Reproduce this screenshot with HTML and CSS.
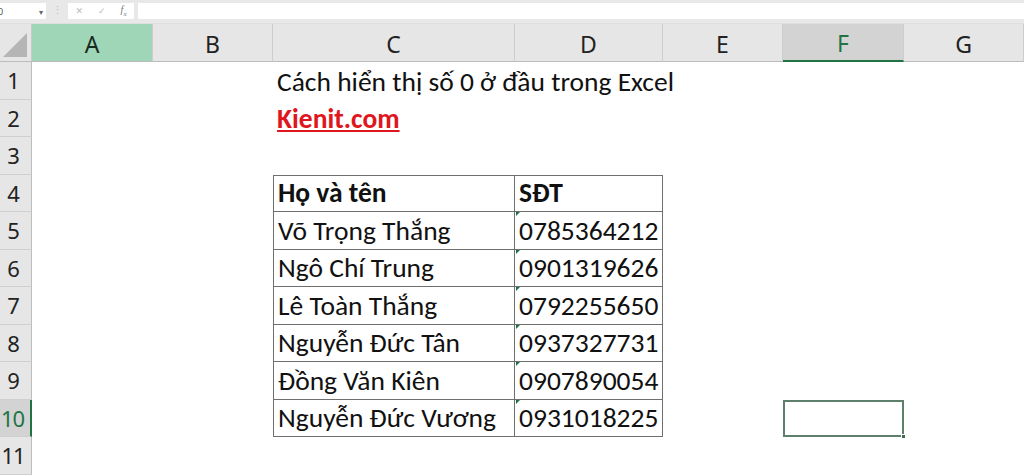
FILE: index.html
```html
<!DOCTYPE html>
<html lang="vi">
<head>
  <meta charset="UTF-8" />
  <title>Cách hiển thị số 0 ở đầu trong Excel</title>
  <link rel="stylesheet" href="styles.css">
</head>
<body>

  <div class="formula-bar">
    <div class="name-box"><span>0</span><span class="drop">&#9662;</span></div>
    <div class="dots">&#8942;</div>
    <div class="fx-box"><span>&#10005;</span><span>&#10003;</span><span class="fx">f<sub>x</sub></span></div>
    <div class="formula-input"></div>
  </div>

  <div class="sheet">
    <div class="row head-row">
      <div class="corner"></div>
      <div class="col-h sel-a">A</div>
      <div class="col-h">B</div>
      <div class="col-h">C</div>
      <div class="col-h">D</div>
      <div class="col-h">E</div>
      <div class="col-h active">F</div>
      <div class="col-h">G</div>
    </div>

    <div class="row">
      <div class="row-h">1</div>
      <div class="cell"></div><div class="cell"></div>
      <div class="cell wide">Cách hiển thị số 0 ở đầu trong Excel</div>
      <div class="cell"></div><div class="cell"></div><div class="cell"></div><div class="cell"></div>
    </div>
    <div class="row">
      <div class="row-h">2</div>
      <div class="cell"></div><div class="cell"></div>
      <div class="cell wide"><span class="link">Kienit.com</span></div>
      <div class="cell"></div><div class="cell"></div><div class="cell"></div><div class="cell"></div>
    </div>
    <div class="row">
      <div class="row-h">3</div>
      <div class="cell"></div><div class="cell"></div><div class="cell"></div>
      <div class="cell"></div><div class="cell"></div><div class="cell"></div><div class="cell"></div>
    </div>
    <div class="row">
      <div class="row-h">4</div>
      <div class="cell"></div><div class="cell"></div>
      <div class="cell tb tb-first tb-left bold">Họ và tên</div>
      <div class="cell tb tb-first bold">SĐT</div>
      <div class="cell"></div><div class="cell"></div><div class="cell"></div>
    </div>
    <div class="row">
      <div class="row-h">5</div>
      <div class="cell"></div><div class="cell"></div>
      <div class="cell tb tb-left">Võ Trọng Thắng</div>
      <div class="cell tb txt-num">0785364212</div>
      <div class="cell"></div><div class="cell"></div><div class="cell"></div>
    </div>
    <div class="row">
      <div class="row-h">6</div>
      <div class="cell"></div><div class="cell"></div>
      <div class="cell tb tb-left">Ngô Chí Trung</div>
      <div class="cell tb txt-num">0901319626</div>
      <div class="cell"></div><div class="cell"></div><div class="cell"></div>
    </div>
    <div class="row">
      <div class="row-h">7</div>
      <div class="cell"></div><div class="cell"></div>
      <div class="cell tb tb-left">Lê Toàn Thắng</div>
      <div class="cell tb txt-num">0792255650</div>
      <div class="cell"></div><div class="cell"></div><div class="cell"></div>
    </div>
    <div class="row">
      <div class="row-h">8</div>
      <div class="cell"></div><div class="cell"></div>
      <div class="cell tb tb-left">Nguyễn Đức Tân</div>
      <div class="cell tb txt-num">0937327731</div>
      <div class="cell"></div><div class="cell"></div><div class="cell"></div>
    </div>
    <div class="row">
      <div class="row-h">9</div>
      <div class="cell"></div><div class="cell"></div>
      <div class="cell tb tb-left">Đồng Văn Kiên</div>
      <div class="cell tb txt-num">0907890054</div>
      <div class="cell"></div><div class="cell"></div><div class="cell"></div>
    </div>
    <div class="row">
      <div class="row-h active">10</div>
      <div class="cell"></div><div class="cell"></div>
      <div class="cell tb tb-left">Nguyễn Đức Vương</div>
      <div class="cell tb txt-num">0931018225</div>
      <div class="cell"></div>
      <div class="cell selected"><span class="handle"></span></div>
      <div class="cell"></div>
    </div>
    <div class="row">
      <div class="row-h">11</div>
      <div class="cell"></div><div class="cell"></div><div class="cell"></div>
      <div class="cell"></div><div class="cell"></div><div class="cell"></div><div class="cell"></div>
    </div>
  </div>

</body>
</html>
```

FILE: styles.css
```css
* { box-sizing: border-box; }
body { margin: 0; width: 1024px; height: 476px; overflow: hidden; background: #fff; font-family: Carlito, Lato, "Liberation Sans", sans-serif; color: #111; }

.formula-bar { height: 24px; background: #e8e8e8; display: flex; align-items: flex-start; padding-top: 3px; border-bottom: 1px solid #dedede; }
.name-box { width: 48px; height: 16px; background: #fff; display: flex; justify-content: space-between; align-items: center; font: 9px "Noto Sans", sans-serif; color: #555; padding: 0 3px 0 0; margin-left: -2px; }
.name-box .drop { font-size: 8px; color: #666; }
.dots { width: 22px; text-align: center; font-size: 11px; color: #bbb; line-height: 16px; }
.fx-box { width: 66px; height: 16px; background: #fff; display: flex; justify-content: space-around; align-items: center; font: 9px "DejaVu Sans", sans-serif; color: #bbb; }
.fx-box .fx { font-family: "Liberation Serif", serif; font-style: italic; color: #777; font-size: 10px; }
.fx-box .fx sub { font-size: 7px; }
.formula-input { flex: 1; height: 16px; background: #fff; margin-left: 4px; }

.sheet { display: flex; flex-direction: column; }
.row { display: grid; grid-template-columns: 32px 121px 120px 242px 148px 120px 121px 120px; height: 37.5px; }
.head-row { height: 38px; }

.corner { background: #e6e6e6; border-right: 1px solid #c9c9c9; border-bottom: 1px solid #bcbcbc; position: relative; }
.corner::after { content: ""; position: absolute; right: 4px; bottom: 4px; border-left: 24px solid transparent; border-bottom: 24px solid #b5b5b5; }
.col-h { background: #e6e6e6; border-right: 1px solid #cdcdcd; border-bottom: 1px solid #bcbcbc; display: flex; align-items: center; justify-content: center; font: 23px "Noto Sans", sans-serif; color: #222; padding-top: 2px; }
.col-h.sel-a { background: #9fd6b8; color: #1a2a20; }
.col-h.active { background: #d3d3d3; color: #217346; border-bottom: 2px solid #217346; }

.row-h { background: #e6e6e6; border-right: 1px solid #bdbdbd; border-bottom: 1px solid #cfcfcf; display: flex; align-items: center; justify-content: center; padding-right: 5px; font: 22px "Noto Sans", sans-serif; color: #222; letter-spacing: -1px; }
.row-h.active { background: #d3d3d3; color: #217346; border-right: 2px solid #217346; }

.cell { display: flex; align-items: flex-end; padding: 0 0 2px 4px; font-size: 27.5px; white-space: nowrap; position: relative; }
.cell.wide { overflow: visible; }
.link { color: #e0161e; font-weight: bold; text-decoration: underline; }
.bold { font-weight: bold; }

.tb { border-right: 1px solid #6f6f6f; border-bottom: 1px solid #6f6f6f; }
.tb-left { border-left: 1px solid #6f6f6f; }
.tb-first { border-top: 1px solid #6f6f6f; }
.txt-num::before { content: ""; position: absolute; left: 1px; top: 0; border-top: 4px solid #1e7145; border-right: 4px solid transparent; }

.selected { border: 2px solid #5d7f6c; }
.handle { position: absolute; right: -4px; bottom: -4px; width: 5px; height: 5px; background: #3f6a52; border: 1px solid #fff; }
```
